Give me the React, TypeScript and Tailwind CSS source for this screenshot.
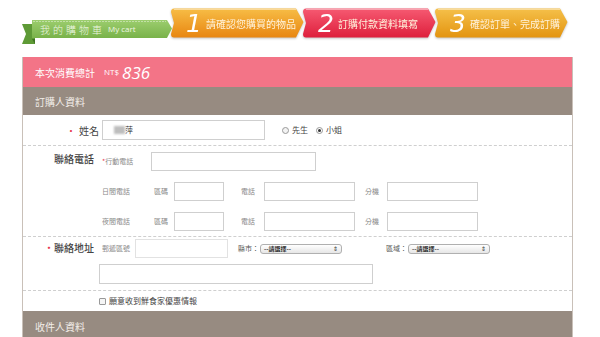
import React from "react";

const font = { fontFamily: '"Noto Sans CJK TC", "Noto Sans", sans-serif' };

function StepShape({ from, to, id }: { from: string; to: string; id: string }) {
  return (
    <svg className="absolute inset-0" width="100%" height="100%" viewBox="0 0 136 30" preserveAspectRatio="none">
      <defs>
        <linearGradient id={id} x1="0" y1="0" x2="0" y2="1">
          <stop offset="0" stopColor={from} />
          <stop offset="1" stopColor={to} />
        </linearGradient>
      </defs>
      <path d="M6 0.5 H128 L135.5 14 L128 29.5 H6 Q3 29.5 3 26 L6 15 L3 4 Q3 0.5 6 0.5 Z" fill={`url(#${id})`} />
      <path d="M6 1.5 H128" stroke="#ffffff" strokeOpacity="0.45" />
    </svg>
  );
}

function Step({ n, text, from, to, id, z }: { n: string; text: string; from: string; to: string; id: string; z: string }) {
  return (
    <div className={`relative h-[30px] w-[136px] shrink-0 ${z} drop-shadow-[0_1px_1px_rgba(0,0,0,0.25)]`}>
      <StepShape from={from} to={to} id={id} />
      <div className="relative flex h-full items-center pl-[18px]">
        <span className="w-[18px] text-[25px] italic font-light leading-none text-white" style={{ fontFamily: '"DejaVu Sans", sans-serif' }}>
          {n}
        </span>
        <span className="ml-[2px] text-[10px] text-[#fff3dc]">{text}</span>
      </div>
    </div>
  );
}

function Ribbon() {
  return (
    <div className="relative z-40 mt-[11px] h-[26px] w-[150px] shrink-0">
      <svg className="absolute inset-0" width="150" height="26" viewBox="0 0 150 26">
        <defs>
          <linearGradient id="gr" x1="0" y1="0" x2="0" y2="1">
            <stop offset="0" stopColor="#9ccd6e" />
            <stop offset="1" stopColor="#79b24a" />
          </linearGradient>
        </defs>
        <path d="M0 5 H13 V25 H0 L4 15 Z" fill="#5e9a36" />
        <path d="M10 20 L13 25 V20 Z" fill="#3f7322" />
        <path d="M10 1 H145 L150 9.5 L145 19 H10 Z" fill="url(#gr)" />
        <path d="M11 2.5 H144" stroke="#ffffff" strokeOpacity="0.4" strokeDasharray="2 1" />
      </svg>
      <div className="relative flex h-[20px] items-center pl-[18px] text-[#eef6e2]">
        <span className="text-[10px] font-light tracking-[3px]">我的購物車</span>
        <span className="ml-[3px] text-[8px]" style={{ fontFamily: '"Open Sans", sans-serif' }}>My cart</span>
      </div>
    </div>
  );
}

function Box({ w, h = "h-[19px]" }: { w: string; h?: string }) {
  return <div className={`${w} ${h} border border-[#cfcfcf] bg-white`} />;
}

function Select({ w }: { w: string }) {
  return (
    <div className={`${w} flex h-[10px] items-center justify-between rounded-[3px] border border-[#b0b0b0] bg-gradient-to-b from-white to-[#e6e6e6] px-[3px]`}>
      <span className="text-[6px] font-bold leading-none text-[#333]">--請選擇--</span>
      <span className="text-[6px] leading-none text-[#333]">⇕</span>
    </div>
  );
}

function Dashed() {
  return <div className="border-t border-dashed border-[#cfcfcf]" />;
}

export default function App() {
  return (
    <div className="h-[337px] w-[600px] overflow-hidden bg-white" style={font}>
      <div className="flex h-[57px] items-start pl-[22px] pt-[8px]">
        <Ribbon />
        <div className="-ml-[4px] z-30 flex">
          <Step n="1" text="請確認您購買的物品" from="#f7bd46" to="#e88611" id="s1" z="z-30" />
        </div>
        <div className="-ml-[4px] z-20 flex">
          <Step n="2" text="訂購付款資料填寫" from="#f65a72" to="#de1f3c" id="s2" z="z-20" />
        </div>
        <div className="-ml-[4px] z-10 flex">
          <Step n="3" text="確認訂單、完成訂購" from="#f5c04a" to="#e39410" id="s3" z="z-10" />
        </div>
      </div>

      <div className="ml-[22px] w-[551px] border-x border-[#c9c0b8]">
        <div className="flex h-[30px] items-center bg-[#f37487] pl-[12px] text-white">
          <span className="text-[10px]">本次消費總計</span>
          <span className="ml-[9px] text-[8px]" style={{ fontFamily: '"Open Sans", sans-serif' }}>NT$</span>
          <span className="ml-[3px] text-[17px] italic leading-none" style={{ fontFamily: '"Open Sans", sans-serif' }}>836</span>
        </div>
        <div className="flex h-[28px] items-center bg-[#978b81] pl-[12px] text-[10px] text-[#f3eee9]">訂購人資料</div>

        <div className="flex h-[30px] items-center text-[#444]">
          <div className="w-[76px] text-right text-[10px]">
            <span className="mr-[3px] text-[#e8384f]">•</span>姓名
          </div>
          <div className="ml-[3px] flex h-[20px] w-[163px] items-center border border-[#cfcfcf] pl-[11px]">
            <div className="h-[8px] w-[11px] bg-[#bdbdbd] blur-[1px]" />
            <span className="text-[8px] text-[#333]">萍</span>
          </div>
          <div className="ml-[17px] flex items-center gap-[3px] text-[8px]">
            <span className="h-[7px] w-[7px] rounded-full border border-[#999] bg-[#f3f3f3]" />
            <span>先生</span>
            <span className="ml-[5px] flex h-[7px] w-[7px] items-center justify-center rounded-full border border-[#999]">
              <span className="h-[3px] w-[3px] rounded-full bg-[#333]" />
            </span>
            <span>小姐</span>
          </div>
        </div>
        <Dashed />

        <div className="flex pt-[5px] text-[#888]">
          <div className="w-[71px] text-right text-[10px] font-medium text-[#444]">聯絡電話</div>
          <div className="ml-[8px] flex flex-col">
            <div className="flex h-[20px] items-center">
              <span className="w-[49px] text-[7px]">
                <span className="text-[#e8384f]">*</span>行動電話
              </span>
              <Box w="w-[165px]" />
            </div>
            <div className="mt-[10px] flex h-[20px] items-center text-[7px]">
              <span className="w-[52px]">日間電話</span>
              <span className="w-[20px]">區碼</span>
              <Box w="w-[50px]" />
              <span className="ml-[17px] w-[23px]">電話</span>
              <Box w="w-[91px]" />
              <span className="ml-[10px] w-[22px]">分機</span>
              <Box w="w-[91px]" />
            </div>
            <div className="mt-[10px] flex h-[20px] items-center text-[7px]">
              <span className="w-[52px]">夜間電話</span>
              <span className="w-[20px]">區碼</span>
              <Box w="w-[50px]" />
              <span className="ml-[17px] w-[23px]">電話</span>
              <Box w="w-[91px]" />
              <span className="ml-[10px] w-[22px]">分機</span>
              <Box w="w-[91px]" />
            </div>
          </div>
        </div>
        <div className="mt-[5px]">
          <Dashed />
        </div>

        <div className="flex pt-[2px] text-[#888]">
          <div className="w-[71px] pt-[1px] text-right text-[10px] font-medium text-[#444]">
            <span className="text-[#e8384f]">•</span>聯絡地址
          </div>
          <div className="ml-[8px] flex flex-col">
            <div className="flex h-[19px] items-center text-[7px]">
              <span className="w-[33px]">郵遞區號</span>
              <div className="h-[19px] w-[93px] border border-[#e2e2e2]" />
              <span className="ml-[10px] w-[22px] text-[#555]">縣市：</span>
              <Select w="w-[82px]" />
              <span className="ml-[44px] w-[22px] text-[#555]">區域：</span>
              <Select w="w-[82px]" />
            </div>
            <div className="-ml-[3px] mt-[6px]">
              <Box w="w-[274px]" h="h-[20px]" />
            </div>
          </div>
        </div>
        <div className="mt-[6px]">
          <Dashed />
        </div>

        <div className="flex h-[20px] items-center pl-[76px] text-[8px] text-[#444]">
          <span className="mr-[3px] h-[7px] w-[7px] rounded-[1px] border border-[#999] bg-[#f5f5f5]" />
          願意收到鮮食家優惠情報
        </div>
        <div className="flex h-[30px] items-center bg-[#978b81] pl-[12px] text-[10px] text-[#f3eee9]">收件人資料</div>
      </div>
    </div>
  );
}
